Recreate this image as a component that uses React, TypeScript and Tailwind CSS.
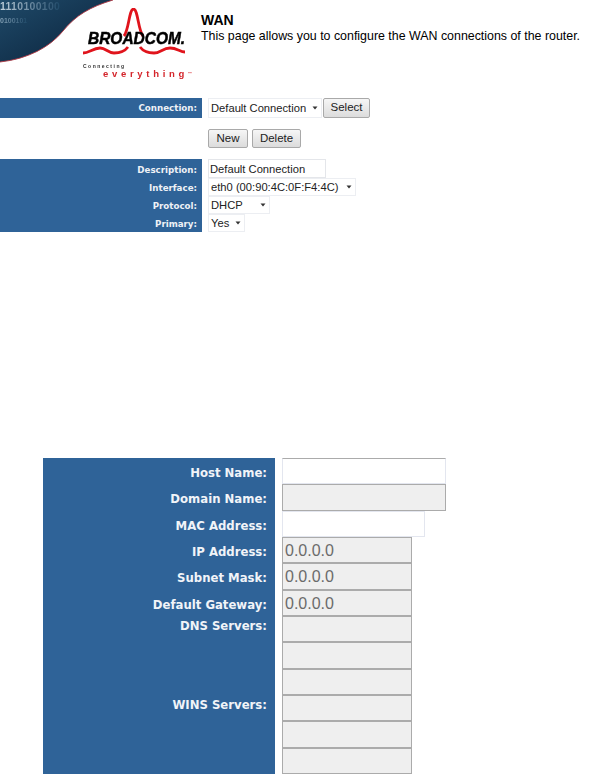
const blue = "bg-[#2f6398]";

function Caret() {
  return (
    <svg width="6" height="4" viewBox="0 0 6 4" className="shrink-0">
      <path d="M0.5 0.5h5L3 3.5z" fill="#333" />
    </svg>
  );
}

function Select({ value, width }: { value: string; width: string }) {
  return (
    <div
      className={`flex h-full items-center justify-between border border-[#eceef2] bg-white pl-[2px] pr-[3px] font-['Liberation_Sans',sans-serif] text-[11.2px] text-[#222] ${width}`}
    >
      <span className="whitespace-nowrap pt-px">{value}</span>
      <Caret />
    </div>
  );
}

function Btn({ label, width }: { label: string; width: string }) {
  return (
    <button
      className={`flex h-full items-center justify-center rounded-[2px] border border-[#a9a9a9] bg-gradient-to-b from-[#f6f6f6] to-[#dcdcdc] font-['Liberation_Sans',sans-serif] text-[11.5px] text-[#222] ${width}`}
    >
      {label}
    </button>
  );
}

function TopLabel({ text }: { text: string }) {
  return (
    <div className="flex h-[18px] shrink-0 items-center justify-end pr-[5px] pt-[3px] font-['DejaVu_Sans',sans-serif] text-[8.7px] font-bold text-[#eef1f6]">
      {text}
    </div>
  );
}

function Logo() {
  return (
    <div className="relative h-[72px] w-[106px] blur-[0.4px]">
      <svg width="106" height="50" viewBox="0 0 106 50" className="absolute left-0 top-0">
        <path
          d="M41 28C46 22 46 1 50.5 1C55 1 55 22 60 28"
          fill="none"
          stroke="#e0141c"
          strokeWidth="2.8"
        />
        <path
          d="M0 45C6 45 10 40 17 40C23 40 25 45 31 45C38 45 42 43 45 39M57 39C60 43 64 45 71 45C77 45 80 40 87 40C94 40 97 44 102 44"
          fill="none"
          stroke="#e0141c"
          strokeWidth="2.8"
        />
      </svg>
      <div className="absolute left-[5px] top-[21px] origin-left scale-x-[0.91] whitespace-nowrap font-['Liberation_Sans',sans-serif] text-[17px] font-bold italic leading-[20px] text-black [-webkit-text-stroke:0.5px_black]">
        BROADCOM.
      </div>
      <div className="absolute left-0 top-[55px] font-['Liberation_Sans',sans-serif] text-[5px] font-bold leading-[7px] tracking-[1.5px] text-[#333]">
        Connecting
      </div>
      <div className="absolute left-[20px] top-[60px] whitespace-nowrap font-['Liberation_Sans',sans-serif] text-[9.5px] font-bold leading-[11px] tracking-[3.7px] text-[#d4252b]">
        everything<span className="align-top text-[4px] tracking-normal">™</span>
      </div>
    </div>
  );
}

function Swoosh() {
  return (
    <div className="relative h-[64px] w-[116px] shrink-0 overflow-hidden">
      <svg width="116" height="64" viewBox="0 0 116 64" className="absolute left-0 top-0 blur-[0.3px]">
        <defs>
          <linearGradient id="sw" x1="0" y1="0" x2="1" y2="1">
            <stop offset="0" stopColor="#1f4a69" />
            <stop offset="0.6" stopColor="#12314c" />
            <stop offset="1" stopColor="#0e2a45" />
          </linearGradient>
        </defs>
        <path d="M0 0H113C90 7 76 15 63 31C50 47 28 59 0 62Z" fill="url(#sw)" />
        <path d="M113 0C90 7 76 15 63 31C50 47 28 59 0 62" fill="none" stroke="#b23a45" strokeWidth="0.9" />
      </svg>
      <div className="absolute left-0 top-px bg-gradient-to-r from-[#c3d3de] to-[#1f4a69] bg-clip-text font-['Liberation_Sans',sans-serif] text-[10.5px] font-bold leading-[11px] tracking-[0.3px] text-transparent blur-[0.3px]">
        1110100100
      </div>
      <div className="absolute left-0 top-[17px] bg-gradient-to-r from-[#8fabbe] to-[#1f4a69] bg-clip-text font-['Liberation_Sans',sans-serif] text-[7px] font-bold leading-[8px] text-transparent blur-[0.3px]">
        0100101
      </div>
    </div>
  );
}

const rows = [
  { label: "Host Name:", width: "w-[164px]", disabled: false, value: "", center: true },
  { label: "Domain Name:", width: "w-[164px]", disabled: true, value: "", center: true },
  { label: "MAC Address:", width: "w-[143px]", disabled: false, value: "", center: true },
  { label: "IP Address:", width: "w-[130px]", disabled: true, value: "0.0.0.0", center: true },
  { label: "Subnet Mask:", width: "w-[130px]", disabled: true, value: "0.0.0.0", center: true },
  { label: "Default Gateway:", width: "w-[130px]", disabled: true, value: "0.0.0.0", center: true },
  { label: "DNS Servers:", width: "w-[130px]", disabled: true, value: "", center: false },
  { label: "", width: "w-[130px]", disabled: true, value: "", center: false },
  { label: "", width: "w-[130px]", disabled: true, value: "", center: false },
  { label: "WINS Servers:", width: "w-[130px]", disabled: true, value: "", center: false },
  { label: "", width: "w-[130px]", disabled: true, value: "", center: false },
  { label: "", width: "w-[130px]", disabled: true, value: "", center: false },
];

export default function App() {
  return (
    <div className="h-[783px] w-[601px] overflow-hidden bg-white font-['Liberation_Sans',sans-serif]">
      <header className="flex h-[98px] items-start">
        <Swoosh />
        <div className="ml-[-33px] mt-[8px]">
          <Logo />
        </div>
        <div className="ml-[12px] mt-[12px] text-black">
          <h1 className="text-[14px] font-bold leading-[17px]">WAN</h1>
          <p className="whitespace-nowrap text-[12.4px] leading-[15px]">
            This page allows you to configure the WAN connections of the router.
          </p>
        </div>
      </header>

      <div className="flex h-[20px] gap-[6px]">
        <div className={`w-[202px] ${blue} flex items-center justify-end pr-[5px] pt-[2px] font-['DejaVu_Sans',sans-serif] text-[8.7px] font-bold text-[#eef1f6]`}>
          Connection:
        </div>
        <div className="flex">
          <Select value="Default Connection" width="w-[114px]" />
          <div className="ml-px h-full">
            <Btn label="Select" width="w-[47px]" />
          </div>
        </div>
      </div>

      <div className="ml-[208px] mt-[11px] flex h-[19px] gap-[4px]">
        <Btn label="New" width="w-[40px]" />
        <Btn label="Delete" width="w-[49px]" />
      </div>

      <div className="mt-[11px] flex h-[73px] gap-[6px]">
        <div className={`w-[202px] ${blue} flex flex-col py-px`}>
          <TopLabel text="Description:" />
          <TopLabel text="Interface:" />
          <TopLabel text="Protocol:" />
          <TopLabel text="Primary:" />
        </div>
        <div className="flex flex-col">
          <div className="h-[19px]">
            <div className="flex h-full w-[118px] items-center border border-[#e4e6ea] pl-[1px] pt-px font-['Liberation_Sans',sans-serif] text-[11.2px] text-[#222]">
              Default Connection
            </div>
          </div>
          <div className="h-[18px]">
            <Select value="eth0 (00:90:4C:0F:F4:4C)" width="w-[148px]" />
          </div>
          <div className="h-[18px]">
            <Select value="DHCP" width="w-[62px]" />
          </div>
          <div className="h-[18px]">
            <Select value="Yes" width="w-[37px]" />
          </div>
        </div>
      </div>

      <div className="ml-[43px] mt-[226px] flex w-[403px] flex-col">
        {rows.map((row, i) => (
          <div key={i} className="flex h-[26.33px] gap-[7px]">
            <div
              className={`w-[232px] ${blue} flex justify-end pr-[8px] font-['DejaVu_Sans',sans-serif] text-[11.7px] font-bold leading-[20px] text-[#f1f4f8] ${
                row.center ? "items-center pt-[4px]" : "items-start"
              }`}
            >
              {row.label}
            </div>
            <input
              readOnly
              value={row.value}
              className={`${row.width} h-full border px-[2px] pt-[2px] font-['Liberation_Sans',sans-serif] text-[16px] text-[#6b6b6b] outline-none ${
                row.disabled
                  ? "border-[#ababab] bg-[#efefef]"
                  : i === 0
                    ? "border-[#e3e6ef] border-t-[#ababab] bg-white"
                    : "border-[#e3e6ef] bg-white"
              }`}
            />
          </div>
        ))}
      </div>
    </div>
  );
}
